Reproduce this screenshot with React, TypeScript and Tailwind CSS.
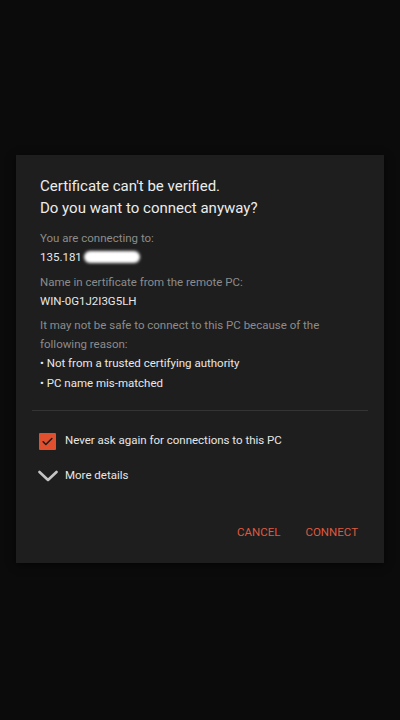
import React from "react";

export default function App() {
  return (
    <div
      className="w-[400px] h-[720px] bg-[#0b0b0b] pt-[155px] px-[16px]"
      style={{ fontFamily: "Roboto, 'Noto Sans', sans-serif" }}
    >
      <div className="w-[368px] h-[408px] bg-[#1e1e1e] shadow-[0_2px_8px_rgba(0,0,0,0.6)] pt-[20px] flex flex-col">
        <div className="px-[24px]">
          <div className="text-[15px] leading-[22px] text-[#ececec]">
            <div>Certificate can't be verified.</div>
            <div>Do you want to connect anyway?</div>
          </div>
          <div className="mt-[10px] text-[11.5px] leading-[19px]">
            <div className="text-[#8c8c8c]">You are connecting to:</div>
            <div className="relative text-[#e8e8e8]">
              135.181
              <span className="absolute left-[44px] top-[3px] w-[56px] h-[12px] rounded-full bg-white blur-[1.5px]" />
            </div>
            <div className="mt-[6px] text-[#8c8c8c]">Name in certificate from the remote PC:</div>
            <div className="text-[#e8e8e8]">WIN-0G1J2I3G5LH</div>
            <div className="mt-[5px] text-[#8c8c8c]">
              It may not be safe to connect to this PC because of the following reason:
            </div>
            <div className="text-[#e8e8e8]">• Not from a trusted certifying authority</div>
            <div className="mt-[1px] text-[#e8e8e8]">• PC name mis-matched</div>
          </div>
        </div>
        <div className="mx-[16px] mt-[17px] h-px bg-[#343434]" />
        <div className="px-[23px] mt-[21px] flex items-center h-[18px]">
          <div className="w-[17px] h-[17px] bg-[#e0502e] rounded-[1px] flex items-center justify-center">
            <svg width="13" height="13" viewBox="0 0 24 24" fill="none">
              <path d="M4 12.5l5 5L20 6.5" stroke="#1e1e1e" strokeWidth="3" strokeLinecap="round" strokeLinejoin="round" />
            </svg>
          </div>
          <span className="ml-[9px] text-[11.5px] text-[#e6e6e6]">Never ask again for connections to this PC</span>
        </div>
        <div className="px-[22px] mt-[17px] flex items-center h-[18px]">
          <svg width="20" height="12" viewBox="0 0 20 12" fill="none">
            <path d="M1.5 2l8.5 8 8.5-8" stroke="#c4c4c4" strokeWidth="2.6" strokeLinecap="round" strokeLinejoin="round" />
          </svg>
          <span className="ml-[7px] text-[11.5px] text-[#e6e6e6]">More details</span>
        </div>
        <div className="mt-auto mb-[22px] flex justify-end pr-[26px] gap-[25px] text-[11.5px] text-[#dd5a40]">
          <span>CANCEL</span>
          <span>CONNECT</span>
        </div>
      </div>
    </div>
  );
}
